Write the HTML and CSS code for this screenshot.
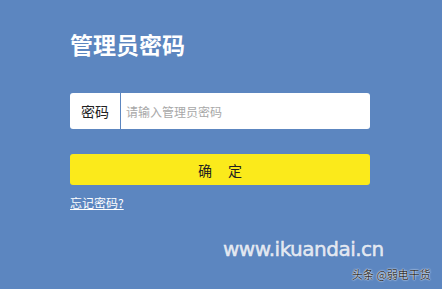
FILE: index.html
```html
<!DOCTYPE html>
<html lang="zh-CN">
<head>
<meta charset="utf-8">
<link rel="stylesheet" href="styles.css">
</head>
<body>
<div class="page">
  <div class="login">
    <h1 class="title">管理员密码</h1>
    <div class="field">
      <span class="field-label">密码</span>
      <span class="field-input">请输入管理员密码</span>
    </div>
    <button class="confirm">确<span class="gap"></span>定</button>
    <a class="forgot" href="#">忘记密码?</a>
  </div>
  <div class="watermark">www.ikuandai.cn</div>
  <div class="credit">头条 @弱电干货</div>
</div>
</body>
</html>
```
FILE: styles.css
```css
html, body {
  margin: 0;
  padding: 0;
}
body {
  background: #5c86c0;
  font-family: "Noto Sans CJK SC", "Microsoft YaHei", sans-serif;
  width: 442px;
  height: 289px;
  overflow: hidden;
}
.page {
  position: relative;
  width: 442px;
  height: 289px;
}
.login {
  padding: 28px 0 0 70px;
  width: 300px;
  display: flex;
  flex-direction: column;
}
.title {
  margin: 0;
  font-size: 23px;
  line-height: 32px;
  font-weight: 700;
  color: #ffffff;
}
.field {
  margin-top: 33px;
  height: 36px;
  background: #ffffff;
  border-radius: 3px;
  display: flex;
  align-items: stretch;
}
.field-label {
  width: 50px;
  border-right: 1px solid #5c86c0;
  display: flex;
  align-items: center;
  justify-content: center;
  font-size: 14px;
  color: #222;
}
.field-input {
  display: flex;
  align-items: center;
  padding-left: 5px;
  font-size: 12px;
  color: #a8a8a8;
}
.confirm {
  margin-top: 25px;
  height: 31px;
  border: none;
  border-radius: 3px;
  background: #fbea1b;
  font-family: inherit;
  font-size: 14px;
  color: #222;
  display: flex;
  align-items: center;
  justify-content: center;
  padding: 0;
}
.gap {
  display: inline-block;
  width: 16px;
}
.forgot {
  margin-top: 9px;
  align-self: flex-start;
  font-size: 12px;
  line-height: 17px;
  color: #ffffff;
  text-decoration: underline;
}
.watermark {
  position: absolute;
  left: 223px;
  top: 235px;
  font-family: "DejaVu Sans", sans-serif;
  font-size: 20px;
  font-weight: 400;
  line-height: 28px;
  color: rgba(238, 240, 245, 0.92);
  letter-spacing: -0.5px;
  -webkit-text-stroke: 0.5px rgba(238, 240, 245, 0.92);
}
.credit {
  position: absolute;
  left: 352px;
  top: 266px;
  font-size: 11px;
  line-height: 16px;
  color: #333;
  text-shadow: 0 0 2px #fff, 0 0 1px #fff;
}
```
